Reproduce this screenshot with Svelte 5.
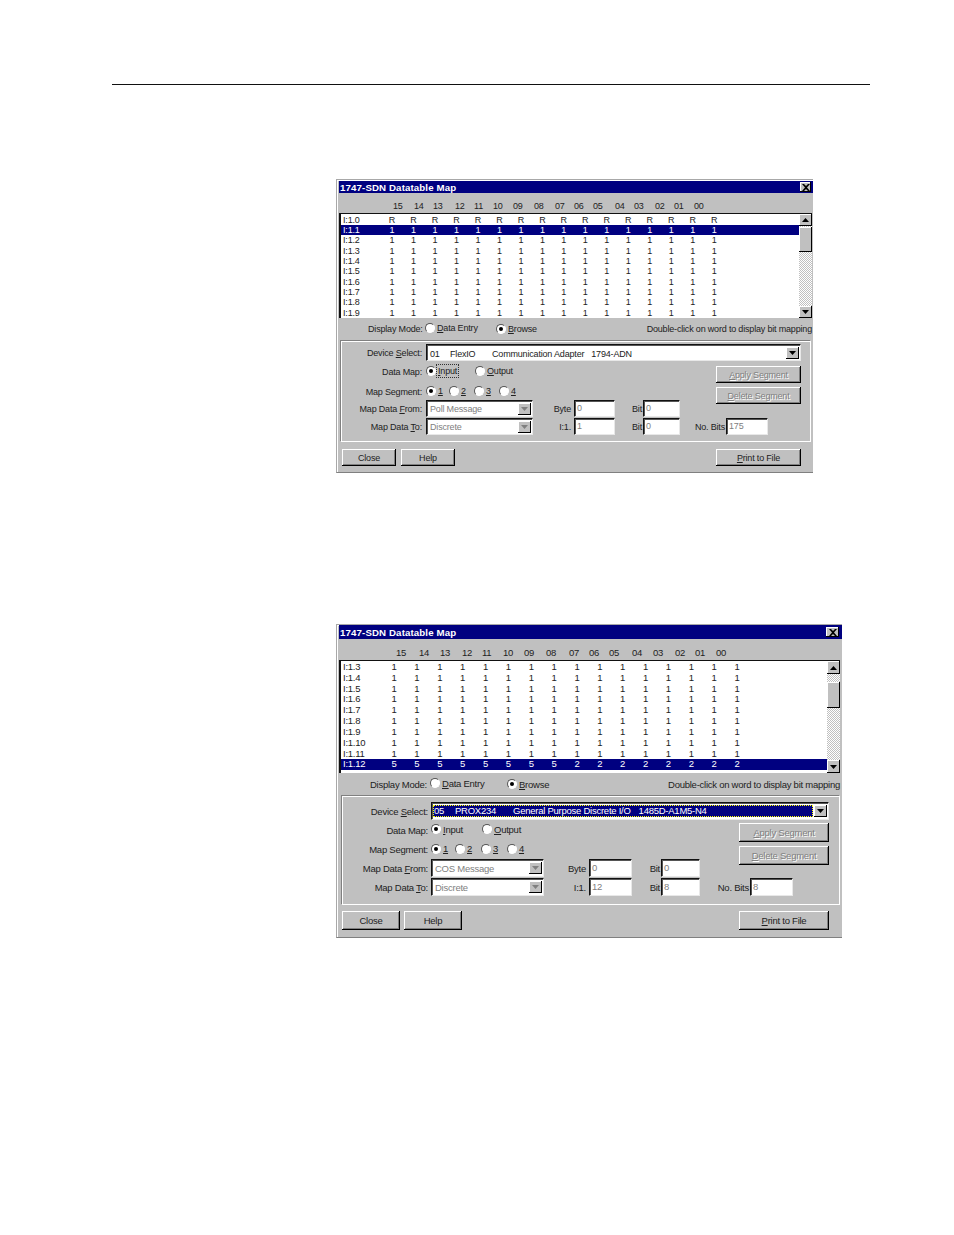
<script>
  const bits = Array(16);

  const first = {
    cls: 'd1',
    heads: [398, 419, 438, 460, 479, 498, 518, 539, 560, 579, 598, 620, 639, 660, 679, 699],
    names: ['15', '14', '13', '12', '11', '10', '09', '08', '07', '06', '05', '04', '03', '02', '01', '00'],
    rows: [
      { id: 'I:1.0', vals: [...bits].map(() => 'R') },
      { id: 'I:1.1', vals: [...bits].map(() => '1'), selected: true },
      ...[2, 3, 4, 5, 6, 7, 8, 9].map((n) => ({ id: `I:1.${n}`, vals: [...bits].map(() => '1') }))
    ],
    device: ['01', 'FlexIO', 'Communication Adapter', '1794-ADN'],
    deviceFocus: false,
    inputFocus: true,
    from: 'Poll Message',
    values: { byte: '0', bit1: '0', i1: '1', bit2: '0', noBits: '175' },
    mapWidths: [49, 40],
    segWidths: [23, 25, 25, 20]
  };

  const second = {
    cls: 'd2',
    heads: [401, 424, 445, 467, 487, 508, 529, 551, 574, 594, 614, 637, 658, 680, 700, 721],
    names: first.names,
    rows: [
      ...[3, 4, 5, 6, 7, 8, 9, 10, 11].map((n) => ({ id: `I:1.${n}`, vals: [...bits].map(() => '1') })),
      { id: 'I:1.12', vals: [...bits].map((_, i) => (i < 8 ? '5' : '2')), selected: true }
    ],
    device: ['05', 'PROX234', 'General Purpose Discrete I/O', '1485D-A1M5-N4'],
    deviceFocus: true,
    inputFocus: false,
    from: 'COS Message',
    values: { byte: '0', bit1: '0', i1: '12', bit2: '8', noBits: '8' },
    mapWidths: [51, 40],
    segWidths: [24, 26, 26, 20]
  };

  const headWidths = (heads) => heads.map((h, i) => (i < heads.length - 1 ? heads[i + 1] - h : 20));
</script>

{#snippet arrow(dir, muted)}
  <svg class="arrow" class:muted width="7" height="4" viewBox="0 0 7 4">
    {#if dir === 'up'}
      <path d="M3.5 0 7 4H0z" />
    {:else}
      <path d="M0 0h7L3.5 4z" />
    {/if}
  </svg>
{/snippet}

{#snippet radio(label, key, checked, focus)}
  <span class="radio-item">
    <span class="radio" class:checked></span>
    <span class="radio-label" class:focus><u>{key}</u>{label}</span>
  </span>
{/snippet}

{#snippet combo(text, muted)}
  <div class="combo">
    <span class="combo-text">{text}</span>
    <span class="combo-btn">{@render arrow('down', muted)}</span>
  </div>
{/snippet}

{#snippet dialog(d)}
  <section class="dialog {d.cls}">
    <header class="title">
      <span>1747-SDN Datatable Map</span>
      <span class="close-x">
        <svg width="8" height="7" viewBox="0 0 8 7">
          <path d="M0 0h2l2 2 2-2h2L5 3.500 8 7H6L4 5 2 7H0l3-3.500z" />
        </svg>
      </span>
    </header>

    <div class="heads">
      {#each d.names as name, i}
        <span class="head" style="width:{headWidths(d.heads)[i]}px">{name}</span>
      {/each}
    </div>

    <div class="list">
      <div class="rows">
        {#each d.rows as row}
          <div class="row" class:selected={row.selected}>
            <span class="row-id">{row.id}</span>
            {#each row.vals as v}
              <span class="cell">{v}</span>
            {/each}
          </div>
        {/each}
      </div>
      <div class="scrollbar">
        <span class="sb-btn">{@render arrow('up')}</span>
        <div class="sb-track"><span class="sb-thumb"></span></div>
        <span class="sb-btn">{@render arrow('down')}</span>
      </div>
    </div>

    <div class="mode">
      <span class="mode-label">Display Mode:</span>
      <span class="mode-entry">{@render radio('ata Entry', 'D', false)}</span>
      {@render radio('rowse', 'B', true)}
      <span class="hint">Double-click on word to display bit mapping</span>
    </div>

    <div class="group">
      <div class="line">
        <span class="label">Device <u>S</u>elect:</span>
        <div class="combo device" class:active={d.deviceFocus}>
          <span class="combo-text device-text">
            <span class="dv-a">{d.device[0]}</span>
            <span class="dv-b">{d.device[1]}</span>
            <span class="dv-c">{d.device[2]}</span>
            <span>{d.device[3]}</span>
          </span>
          <span class="combo-btn">{@render arrow('down')}</span>
        </div>
      </div>

      <div class="upper">
        <div class="fields">
          <div class="line map">
            <span class="label">Data Map:</span>
            <span class="opt" style="width:{d.mapWidths[0]}px">{@render radio('nput', 'I', true, d.inputFocus)}</span>
            <span class="opt" style="width:{d.mapWidths[1]}px">{@render radio('utput', 'O', false)}</span>
          </div>
          <div class="line seg">
            <span class="label">Map Segment:</span>
            {#each ['1', '2', '3', '4'] as n, i}
              <span class="opt" style="width:{d.segWidths[i]}px">{@render radio('', n, i === 0)}</span>
            {/each}
          </div>
          <div class="line">
            <span class="label">Map Data <u>F</u>rom:</span>
            {@render combo(d.from, true)}
            <span class="small-label byte-label">Byte</span>
            <span class="field byte">{d.values.byte}</span>
            <span class="small-label bit-label">Bit</span>
            <span class="field bit">{d.values.bit1}</span>
          </div>
        </div>
        <div class="actions">
          <button class="btn off"><u>A</u>pply Segment</button>
          <button class="btn off"><u>D</u>elete Segment</button>
        </div>
      </div>

      <div class="line to">
        <span class="label">Map Data <u>T</u>o:</span>
        {@render combo('Discrete', true)}
        <span class="small-label byte-label">I:1.</span>
        <span class="field byte">{d.values.i1}</span>
        <span class="small-label bit-label">Bit</span>
        <span class="field bit">{d.values.bit2}</span>
        <span class="small-label nobits-label">No. Bits</span>
        <span class="field nobits">{d.values.noBits}</span>
      </div>
    </div>

    <footer class="footer">
      <button class="btn small">Close</button>
      <button class="btn small">Help</button>
      <button class="btn print"><u>P</u>rint to File</button>
    </footer>
  </section>
{/snippet}

<main class="page">
  <hr class="rule" />
  {@render dialog(first)}
  {@render dialog(second)}
</main>

<style>
  :global(body) {
    margin: 0;
    background: #fff;
  }

  .page {
    min-height: 1235px;
    box-sizing: border-box;
    padding: 84px 0 0 112px;
    font-family: "Liberation Sans", Arial, sans-serif;
    color: #222;
  }

  .rule {
    width: 758px;
    height: 1px;
    margin: 0;
    border: 0;
    background: #111;
  }

  .dialog {
    box-sizing: border-box;
    margin-left: 224px;
    padding: var(--dlg-top) 0 0 2px;
    border-top: 1px solid #a8a8a8;
    border-left: 1px solid #a8a8a8;
    border-bottom: 1px solid #808080;
    background: #c0c0c0;
    box-shadow: inset 1px 1px 0 #fff;
    font-size: var(--font);
    letter-spacing: var(--track);
  }

  .d1 {
    --font: 9px;
    --track: -0.18px;
    --dlg-top: 1px;
    --title-h: 12px;
    --x-w: 11px;
    --x-right: 2px;
    --head-h: 20px;
    --head-pad: 54px;
    --list-h: 105px;
    --list-right: 1px;
    --rows-top: 0.7px;
    --row-h: 10.33px;
    --id-w: 39.3px;
    --col: 21.47px;
    --sb-w: 13px;
    --sb-btn: 12px;
    --sb-top: 1px;
    --thumb-h: 25px;
    --mode-h: 22px;
    --mode-pad: 29px;
    --mode-right: 1px;
    --mode-label: 57px;
    --entry-w: 71px;
    --label-w: 81px;
    --label-gap: 4px;
    --combo-w: 107px;
    --device-w: 375px;
    --device-top: 2px;
    --map-h: 22px;
    --seg-h: 17px;
    --field-h: 17px;
    --byte-label: 38px;
    --byte-w: 41px;
    --bit-label: 27px;
    --bit-w: 37px;
    --nobits-label: 45px;
    --nobits-w: 42px;
    --btn-w: 85px;
    --btn-h: 17px;
    --group-h: 102px;
    --group-left: 1px;
    --group-pad: 3px;
    --act-top: 5px;
    --group-right: 9px;
    --small-w: 54px;
    --foot-h: 17px;
    --foot-top: 7px;
    --foot-right: 12px;
    --foot-gap: 5px;
    --dv-a: 20px;
    --dv-b: 42px;
    --dv-c: 7px;
    width: 477px;
    height: 294px;
    margin-top: 94px;
  }

  .d2 {
    --font: 9.5px;
    --track: -0.25px;
    --dlg-top: 0px;
    --title-h: 14px;
    --x-w: 13px;
    --x-right: 3px;
    --head-h: 21px;
    --head-pad: 57px;
    --list-h: 113px;
    --list-right: 2px;
    --rows-top: 1px;
    --row-h: 10.84px;
    --id-w: 40.6px;
    --col: 22.87px;
    --sb-w: 13px;
    --sb-btn: 13px;
    --sb-top: 8px;
    --thumb-h: 26px;
    --mode-h: 22px;
    --mode-pad: 31px;
    --mode-right: 2px;
    --mode-label: 60px;
    --entry-w: 77px;
    --label-w: 86px;
    --label-gap: 3px;
    --combo-w: 113px;
    --device-w: 398px;
    --device-top: 0px;
    --map-h: 20px;
    --seg-h: 19px;
    --field-h: 18px;
    --byte-label: 42px;
    --byte-w: 43px;
    --bit-label: 28px;
    --bit-w: 39px;
    --nobits-label: 49px;
    --nobits-w: 43px;
    --btn-w: 90px;
    --btn-h: 19px;
    --group-h: 110px;
    --group-left: 2px;
    --group-pad: 6px;
    --act-top: 3px;
    --group-right: 10px;
    --small-w: 58px;
    --foot-h: 19px;
    --foot-top: 6px;
    --foot-right: 13px;
    --foot-gap: 4px;
    --dv-a: 21px;
    --dv-b: 58px;
    --dv-c: 8px;
    width: 506px;
    height: 314px;
    margin-top: 151px;
  }

  .title {
    display: flex;
    align-items: center;
    justify-content: space-between;
    height: var(--title-h);
    padding: 0 var(--x-right) 0 1px;
    background: #000080;
    color: #fff;
    font-size: 9.7px;
    font-weight: 700;
    letter-spacing: 0.12px;
  }

  .close-x {
    display: flex;
    align-items: center;
    justify-content: center;
    box-sizing: border-box;
    width: var(--x-w);
    height: 10px;
    background: #c0c0c0;
    box-shadow: inset -1px -1px 0 #000, inset 1px 1px 0 #fff;
  }

  .close-x path {
    fill: #000;
  }

  .heads {
    display: flex;
    align-items: flex-end;
    box-sizing: border-box;
    height: var(--head-h);
    padding: 0 0 2px var(--head-pad);
  }

  .head {
    flex: none;
  }

  .list {
    display: flex;
    box-sizing: border-box;
    height: var(--list-h);
    margin-right: var(--list-right);
    background: #fff;
    border-top: 1px solid #111;
    border-left: 2px solid #111;
  }

  .rows {
    flex: 1;
    padding-top: var(--rows-top);
    overflow: hidden;
  }

  .row {
    display: flex;
    align-items: center;
    height: var(--row-h);
    line-height: var(--row-h);
    padding-left: 1px;
  }

  .row.selected {
    background: #000080;
    color: #fff;
  }

  .row-id {
    flex: none;
    box-sizing: border-box;
    width: var(--id-w);
    padding-left: 1px;
  }

  .cell {
    flex: 0 0 var(--col);
    text-align: center;
  }

  .scrollbar {
    display: flex;
    flex: none;
    flex-direction: column;
    width: var(--sb-w);
  }

  .sb-btn {
    display: flex;
    flex: none;
    align-items: center;
    justify-content: center;
    height: var(--sb-btn);
    background: #c0c0c0;
    box-shadow: inset -1px -1px 0 #000, inset 1px 1px 0 #fff;
  }

  .sb-track {
    flex: 1;
    padding-top: var(--sb-top);
    background: repeating-conic-gradient(#c0c0c0 0 25%, #fff 0 50%) 0 0 / 2px 2px;
  }

  .sb-thumb {
    display: block;
    height: var(--thumb-h);
    background: #c0c0c0;
    box-shadow: inset -1px -1px 0 #000, inset 1px 1px 0 #fff;
  }

  .arrow path {
    fill: #000;
  }

  .arrow.muted path {
    fill: #808080;
  }

  .mode {
    display: flex;
    align-items: center;
    height: var(--mode-h);
    padding: 0 var(--mode-right) 0 var(--mode-pad);
    white-space: nowrap;
  }

  .mode-label {
    flex: none;
    width: var(--mode-label);
  }

  .mode-entry {
    flex: none;
    width: var(--entry-w);
  }

  .hint {
    margin-left: auto;
  }

  .radio-item {
    display: inline-flex;
    align-items: center;
    gap: 2px;
    white-space: nowrap;
  }

  .radio {
    position: relative;
    flex: none;
    box-sizing: border-box;
    width: 10px;
    height: 10px;
    border: 1px solid;
    border-color: #555 #fff #fff #555;
    border-radius: 50%;
    background: #fff;
  }

  .radio.checked::after {
    content: "";
    position: absolute;
    top: 2px;
    left: 2px;
    width: 4px;
    height: 4px;
    border-radius: 50%;
    background: #000;
  }

  .radio-label.focus {
    outline: 1px dotted #333;
    outline-offset: 1px;
  }

  .group {
    box-sizing: border-box;
    height: var(--group-h);
    margin: 0 2px 0 var(--group-left);
    padding: var(--group-pad) var(--group-right) 0 0;
    border: 1px solid #808080;
    border-right-color: #fff;
    border-bottom-color: #fff;
    box-shadow: inset 1px 1px 0 #fff;
  }

  .line {
    display: flex;
    align-items: center;
  }

  .line.map {
    height: var(--map-h);
  }

  .line.seg {
    height: var(--seg-h);
  }

  .label {
    flex: none;
    width: var(--label-w);
    margin-right: var(--label-gap);
    text-align: right;
    white-space: nowrap;
  }

  .opt {
    flex: none;
  }

  .upper {
    display: flex;
    justify-content: space-between;
  }

  .fields {
    flex: none;
  }

  .actions {
    display: flex;
    flex-direction: column;
    gap: 4px;
    padding-top: var(--act-top);
  }

  .line.to {
    margin-top: 1px;
  }

  .combo,
  .field {
    box-sizing: border-box;
    height: var(--field-h);
    background: #fff;
    border: 1px solid;
    border-color: #111 #e8e8e8 #e8e8e8 #111;
    box-shadow: inset 1px 1px 0 #555;
  }

  .combo {
    display: flex;
    flex: none;
    align-items: center;
    width: var(--combo-w);
    color: #808080;
  }

  .combo.device {
    width: var(--device-w);
    color: #222;
  }

  .combo-text {
    flex: 1;
    padding-left: 3px;
    white-space: nowrap;
  }

  .device-text {
    display: flex;
    padding-top: var(--device-top);
  }

  .dv-a {
    width: var(--dv-a);
  }

  .dv-b {
    width: var(--dv-b);
  }

  .dv-c {
    margin-right: var(--dv-c);
  }

  .combo.active .device-text {
    margin: 1px;
    padding-left: 1px;
    background: #000080;
    color: #fff;
    outline: 1px dotted #ff0;
    outline-offset: -1px;
    line-height: 12px;
  }

  .combo-btn {
    display: flex;
    flex: none;
    align-items: center;
    justify-content: center;
    width: 13px;
    height: 12px;
    margin-right: 1px;
    background: #c0c0c0;
    box-shadow: inset -1px -1px 0 #000, inset 1px 1px 0 #fff;
  }

  .field {
    flex: none;
    padding-left: 2px;
    line-height: calc(var(--field-h) - 3px);
    color: #808080;
  }

  .small-label {
    flex: none;
    text-align: right;
    white-space: nowrap;
  }

  .byte-label {
    width: var(--byte-label);
    margin-right: 3px;
  }

  .byte {
    width: var(--byte-w);
  }

  .bit-label {
    width: var(--bit-label);
    margin-right: 1px;
  }

  .bit {
    width: var(--bit-w);
  }

  .nobits-label {
    width: var(--nobits-label);
    margin-right: 1px;
  }

  .nobits {
    width: var(--nobits-w);
  }

  .btn {
    display: block;
    box-sizing: border-box;
    width: var(--btn-w);
    height: var(--btn-h);
    padding: 0;
    border: 0;
    background: #c0c0c0;
    box-shadow: inset -1px -1px 0 #000, inset 1px 1px 0 #fff, inset -2px -2px 0 #808080;
    font: inherit;
    letter-spacing: inherit;
    color: #222;
  }

  .btn.off {
    color: #808080;
    text-shadow: 1px 1px 0 #fff;
  }

  .footer {
    display: flex;
    gap: var(--foot-gap);
    padding: var(--foot-top) var(--foot-right) 0 3px;
  }

  .footer .btn {
    height: var(--foot-h);
  }

  .btn.small {
    width: var(--small-w);
  }

  .btn.print {
    margin-left: auto;
  }
</style>
